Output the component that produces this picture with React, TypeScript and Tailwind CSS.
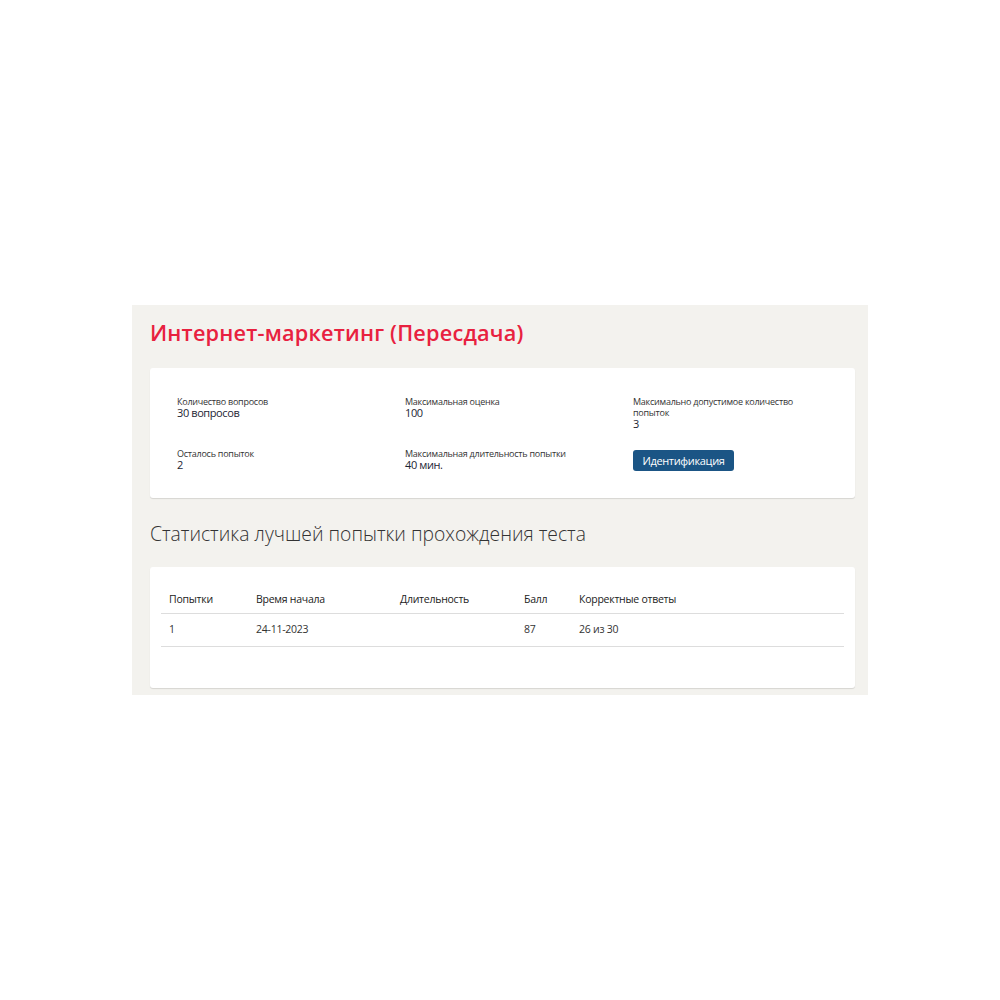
import * as React from "react"

const info = [
  { label: "Количество вопросов", value: "30 вопросов" },
  { label: "Максимальная оценка", value: "100" },
  { label: "Максимально допустимое количество попыток", value: "3" },
  { label: "Осталось попыток", value: "2" },
  { label: "Максимальная длительность попытки", value: "40 мин." },
]

const columns = [
  { title: "Попытки", w: "w-[87px]" },
  { title: "Время начала", w: "w-[144px]" },
  { title: "Длительность", w: "w-[124px]" },
  { title: "Балл", w: "w-[55px]" },
  { title: "Корректные ответы", w: "flex-1" },
]

const rows = [["1", "24-11-2023", "", "87", "26 из 30"]]

export default function App() {
  return (
    <div className="w-[1000px] h-[1000px] bg-white pt-[305px] font-['Open_Sans',sans-serif] text-[#222]">
      <div className="mx-[132px] bg-[#f3f2ee] pt-[14px] pb-[7px] pl-[18px] pr-[13px]">
        <h1 className="text-[21.7px] font-semibold text-[#e8213f] leading-[28px] tracking-[0.2px]">
          Интернет-маркетинг (Пересдача)
        </h1>

        {/* Info card */}
        <div className="mt-[21px] bg-white rounded-[3px] shadow-[0_1px_1px_rgba(0,0,0,0.12)] pl-[27px] pt-[28px] pb-[27px]">
          <div className="grid grid-cols-[228px_228px_175px] gap-y-[18px]">
            {info.map((item) => (
              <div key={item.label} className="flex flex-col">
                <span className="text-[9px] leading-[11px] tracking-[-0.25px] text-[#333]">{item.label}</span>
                <span className="text-[11px] leading-[12px] tracking-[-0.4px] font-medium text-[#1c2533]">{item.value}</span>
              </div>
            ))}
            <div className="-mt-[1px]">
              <button className="h-[21px] w-[101px] rounded-[3px] bg-[#1b5585] text-white text-[11px] tracking-[-0.35px] leading-[21px]">
                Идентификация
              </button>
            </div>
          </div>
        </div>

        <h2 className="mt-[22px] text-[19.3px] font-light text-[#333] leading-[28px]">
          Статистика лучшей попытки прохождения теста
        </h2>

        {/* Stats card */}
        <div className="mt-[19px] bg-white rounded-[3px] shadow-[0_1px_1px_rgba(0,0,0,0.12)] px-[11px] pt-[24px] pb-[41px]">
          <div className="flex text-[10.5px] tracking-[-0.25px] text-[#222] border-b border-[#ddd] h-[23px] items-start">
            {columns.map((c) => (
              <div key={c.title} className={`${c.w} pl-[8px] leading-[16px]`}>
                {c.title}
              </div>
            ))}
          </div>
          {rows.map((r, i) => (
            <div key={i} className="flex text-[10.5px] tracking-[-0.25px] text-[#333] border-b border-[#ddd] h-[33px] items-center">
              {r.map((cell, j) => (
                <div key={j} className={`${columns[j].w} pl-[8px]`}>
                  {cell}
                </div>
              ))}
            </div>
          ))}
        </div>
      </div>
    </div>
  )
}
